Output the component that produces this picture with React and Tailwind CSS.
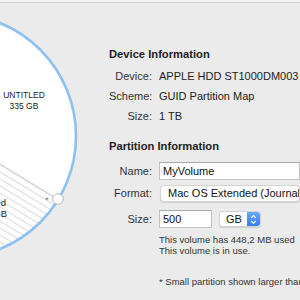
import React from 'react';

const font = { fontFamily: '"Liberation Sans", Arial, sans-serif' };

// pie geometry, in svg coords (svg starts 3px below the page top)
const CX = -46;
const CY = 133;
const R = 122;

function PieChart() {
    const hx = 58;
    const hy = 196;
    return (
        <svg width="104" height="297" viewBox="0 0 104 297" className="shrink-0 overflow-hidden">
            <defs>
                <pattern id="stripes" width="8" height="6" patternUnits="userSpaceOnUse" patternTransform="rotate(31.2)">
                    <line x1="0" y1="0.5" x2="8" y2="0.5" stroke="#d6d6d6" strokeWidth="0.9" />
                </pattern>
                <clipPath id="disk">
                    <circle cx={CX} cy={CY} r={R} />
                </clipPath>
            </defs>
            <circle cx={CX} cy={CY} r={R} fill="#ffffff" />
            <path
                d={`M ${CX} ${CY} L ${hx} ${hy} A ${R} ${R} 0 0 1 ${CX} ${CY + R} Z`}
                fill="url(#stripes)"
                clipPath="url(#disk)"
            />
            <line x1={CX} y1={CY} x2={hx} y2={hy} stroke="#cfcfcf" strokeWidth="0.9" />
            <circle cx={CX} cy={CY} r={R} fill="none" stroke="#8fc0f3" strokeWidth="2.6" />
            <text x="24" y="95" textAnchor="middle" fontSize="8.5" fill="#222" style={font}>UNTITLED</text>
            <text x="24" y="106" textAnchor="middle" fontSize="8.5" fill="#222" style={font}>335 GB</text>
            <text x="6" y="203" textAnchor="end" fontSize="9.5" fill="#222" style={font}>Untitled</text>
            <text x="7" y="214" textAnchor="end" fontSize="9.5" fill="#222" style={font}>1 GB</text>
            <text x="47" y="200" textAnchor="middle" fontSize="9" fill="#777" style={font}>*</text>
            <circle cx={hx} cy={hy} r="5.3" fill="#ffffff" stroke="#a9a9a9" strokeWidth="0.8" />
        </svg>
    );
}

function Row({ label, children }) {
    return (
        <div className="grid grid-cols-[43px_1fr] gap-x-[7px] h-[20px] items-center">
            <span className="text-right text-[#333]">{label}</span>
            <span className="whitespace-nowrap text-[#222]">{children}</span>
        </div>
    );
}

function Stepper() {
    return (
        <div className="w-[13px] h-full rounded-r-[3px] bg-gradient-to-b from-[#68a9f8] to-[#2f7df6] flex items-center justify-center">
            <svg width="7" height="11" viewBox="0 0 7 11">
                <path d="M1.2 4 L3.5 1.6 L5.8 4" fill="none" stroke="#fff" strokeWidth="1.1" />
                <path d="M1.2 7 L3.5 9.4 L5.8 7" fill="none" stroke="#fff" strokeWidth="1.1" />
            </svg>
        </div>
    );
}

export default function App() {
    return (
        <div className="w-[300px] h-[300px] overflow-hidden bg-[#ebebeb] flex flex-col" style={font}>
            <div className="h-[3px] bg-[#f3f3f3] border-b border-[#d4d4d4] shrink-0"></div>
            <div className="flex flex-1">
                <PieChart />

                <div className="pl-[5px] pt-[45px] text-[11px] leading-none flex-1 min-w-0">
                    <h3 className="font-bold text-[11.2px] text-[#222] h-[14px] flex items-center">Device Information</h3>
                    <div className="mt-[4px]">
                        <Row label="Device:">APPLE HDD ST1000DM003</Row>
                        <Row label="Scheme:">GUID Partition Map</Row>
                        <Row label="Size:">1 TB</Row>
                    </div>

                    <h3 className="mt-[14px] font-bold text-[11.2px] text-[#222] h-[14px] flex items-center">Partition Information</h3>

                    <div className="mt-[8px] grid grid-cols-[43px_1fr] gap-x-[7px] items-center">
                        <span className="text-right text-[#333]">Name:</span>
                        <div className="h-[18px] bg-white border border-[#c2c2c2] border-t-[#a9a9a9] flex items-center pl-[3px] text-[#111] whitespace-nowrap">MyVolume</div>
                    </div>

                    <div className="mt-[5px] grid grid-cols-[43px_1fr] gap-x-[7px] items-center">
                        <span className="text-right text-[#333]">Format:</span>
                        <div className="h-[17px] ml-[1px] bg-white rounded-[4px] border border-[#d3d3d3] shadow-[0_1px_1px_rgba(0,0,0,0.12)] flex items-center pl-[7px] text-[#111] whitespace-nowrap overflow-hidden">
                            Mac OS Extended (Journaled)
                        </div>
                    </div>

                    <div className="mt-[8px] grid grid-cols-[43px_1fr] gap-x-[7px] items-center">
                        <span className="text-right text-[#333]">Size:</span>
                        <div className="flex items-center gap-[7px]">
                            <div className="w-[53px] h-[18px] bg-white border border-[#c2c2c2] border-t-[#a9a9a9] flex items-center pl-[3px] text-[#111]">500</div>
                            <div className="w-[42px] h-[16px] bg-white rounded-[3px] border border-[#d3d3d3] shadow-[0_1px_1px_rgba(0,0,0,0.12)] flex items-center justify-between overflow-hidden">
                                <span className="pl-[6px] text-[#111]">GB</span>
                                <Stepper />
                            </div>
                        </div>
                    </div>

                    <div className="mt-[6px] pl-[50px] text-[9.5px] leading-[11px] text-[#333] whitespace-nowrap">
                        <p>This volume has 448,2 MB used</p>
                        <p>This volume is in use.</p>
                    </div>

                    <p className="mt-[20px] pl-[50px] text-[9.5px] leading-[11px] text-[#333] whitespace-nowrap">
                        * Small partition shown larger than actual size.
                    </p>
                </div>
            </div>
        </div>
    );
}
